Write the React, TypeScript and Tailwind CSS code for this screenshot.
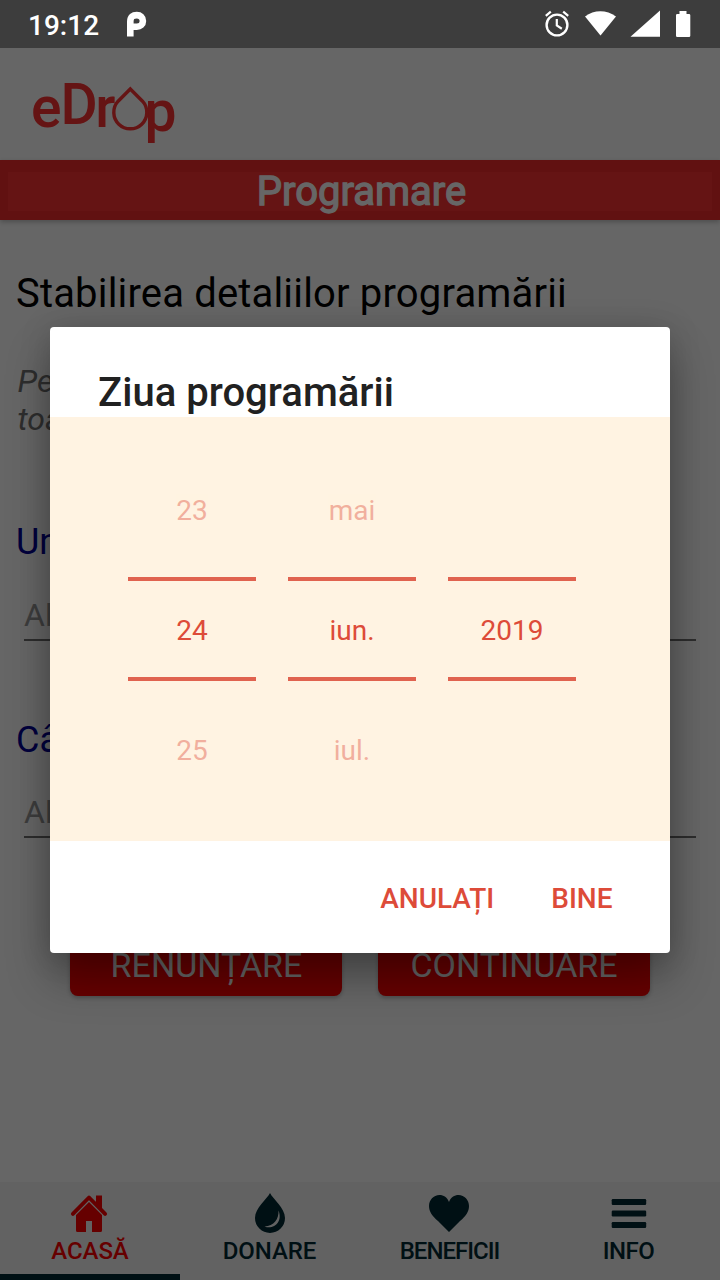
import React from "react";

function StatusBar() {
  return (
    <header className="relative z-20 flex h-12 shrink-0 items-center justify-between bg-[#3d3d3d] text-white">
      <div className="flex items-center">
        <span className="ml-[28px] mt-[3px] text-[28px] font-medium leading-none">19:12</span>
        <svg className="ml-[27px]" width="22" height="26" viewBox="0 0 22 26">
          <path
            fill="none"
            stroke="currentColor"
            strokeWidth="6.6"
            d="M4.3 25.5V10.5C4.3 5.5 7 4.1 10.8 4.1C14.3 4.1 16.9 6.3 16.9 9.9C16.9 13.5 14.3 15.7 10.8 15.7H4.3"
          />
        </svg>
      </div>
      <svg className="mr-[28px]" width="150" height="32" viewBox="542 8 150 32" fill="currentColor">
        <circle cx="557" cy="25" r="10.4" fill="none" stroke="currentColor" strokeWidth="2.4" />
        <path d="M556.8 19v6.5l5 3.2M545.8 15.9l5-4.2M568.2 15.9l-5-4.2" fill="none" stroke="currentColor" strokeWidth="2.2" />
        <path d="M585 16.6C589.5 13 595 11.3 600.3 11.3S611.5 13 616 16.6L600.5 35.5Z" />
        <path d="M630.5 36.7H660V10.5Z" />
        <path d="M679.5 11h7v3h2.5a1.3 1.3 0 0 1 1.3 1.3v20.4a1.3 1.3 0 0 1-1.3 1.3h-11.7a1.3 1.3 0 0 1-1.3-1.3v-20.4a1.3 1.3 0 0 1 1.3-1.3h2.2Z" />
      </svg>
    </header>
  );
}

function Logo() {
  return (
    <svg className="ml-7 block" width="156" height="112" viewBox="28 48 156 112" fill="#fc3232">
      <g fontFamily="Roboto, sans-serif" fontSize="57" fontWeight="500">
        <text x="31" y="127">e</text>
        <text x="60.5" y="123.7">D</text>
        <text x="95.3" y="127">r</text>
        <text x="144.5" y="131">p</text>
      </g>
      <path
        d="M130.3 89L142.5 101.2A16.5 16.5 0 1 1 118.1 101.2Z"
        fill="none"
        stroke="#fc3232"
        strokeWidth="3.4"
      />
    </svg>
  );
}

function Field({ label, inputClass }: { label: string; inputClass: string }) {
  return (
    <div className="h-[198px] px-4">
      <div className="text-[36px] leading-[42px] text-[#000099]">{label}</div>
      <div className={inputClass}>Al</div>
    </div>
  );
}

function Tab({
  label,
  labelClass,
  active,
  children,
}: {
  label: string;
  labelClass: string;
  active?: boolean;
  children: React.ReactNode;
}) {
  return (
    <div className={active ? "flex w-[180px] flex-col items-center text-[#ff0000]" : "flex w-[180px] flex-col items-center text-[#002833]"}>
      <div className="mt-[10px] h-[44px]">{children}</div>
      <span className={labelClass}>{label}</span>
      {active && <div className="mt-auto h-[6px] w-full bg-[#002833]" />}
    </div>
  );
}

function Wheel({ items }: { items: string[] }) {
  return (
    <div className="flex w-32 flex-col text-center text-[28px] leading-[40px] text-[#dd4b39]">
      <div className="flex h-[160px] items-center justify-center pt-[28px]">
        <span className="opacity-40">{items[0]}</span>
      </div>
      <div className="flex h-[104px] items-center justify-center border-y-4 border-[#e0624f] pt-[4px]">{items[1]}</div>
      <div className="flex h-[160px] items-center justify-center pb-[20px]">
        <span className="opacity-40">{items[2]}</span>
      </div>
    </div>
  );
}

function DateDialog() {
  return (
    <div className="absolute inset-0 z-10 flex items-center justify-center bg-black/60">
      <div className="flex h-[626px] w-[620px] flex-col overflow-hidden rounded-[4px] bg-white shadow-[0_26px_44px_0_rgba(0,0,0,0.3),0_2px_32px_0_rgba(0,0,0,0.16)]">
        <h2 className="h-[90px] pl-12 pt-[42px] text-[40px] font-medium leading-[47px] tracking-[0.03px] text-[#212121]">Ziua programării</h2>
        <div className="flex h-[424px] gap-8 bg-[#fff3e2] pl-[78px]">
          <Wheel items={["23", "24", "25"]} />
          <Wheel items={["mai", "iun.", "iul."]} />
          <Wheel items={["", "2019", ""]} />
        </div>
        <div className="flex h-[112px] items-center justify-end gap-[57px] pr-[57.5px] pt-[3px] text-[28px] font-medium text-[#dd4b39]">
          <button>ANULAȚI</button>
          <button>BINE</button>
        </div>
      </div>
    </div>
  );
}

export default function App() {
  return (
    <div className="relative flex h-[1280px] w-[720px] flex-col overflow-hidden bg-white font-['Roboto',sans-serif]">
      <StatusBar />
      <Logo />
      <div className="flex h-[60px] shrink-0 items-center justify-center border-x-8 border-b-[9px] border-t-[12px] border-[#f22b2b] bg-[#fc3232] shadow-[0_2px_5px_rgba(0,0,0,0.25)]">
        <h1 className="ml-[3px] text-[40px] font-normal leading-none text-white [-webkit-text-stroke:1.3px_#fff]">
          Programare
        </h1>
      </div>
      <main className="flex flex-1 flex-col">
        <h2 className="mt-[50px] pl-4 text-[40px] leading-[47px] tracking-[0.17px] text-black">Stabilirea detaliilor programării</h2>
        <p className="mt-[45px] whitespace-pre pl-[17.5px] text-[32px] italic leading-[38px] text-[#737373]">{"Pe\ntoa"}</p>
        <div className="mt-[83px]">
          <Field
            label="Un"
            inputClass="mx-2 mt-[26px] h-[52px] border-b-2 border-[#727272] text-[32px] leading-[52px] text-[#999999]"
          />
          <Field
            label="Câ"
            inputClass="mx-2 mt-[25px] h-[52px] border-b-2 border-[#727272] text-[32px] leading-[52px] text-[#999999]"
          />
        </div>
        <div className="flex gap-9 pl-[70px] text-[34px] text-white">
          <button className="h-[79px] w-[272px] rounded-lg bg-[#ff0000] pl-px pt-[18px] shadow-[0_2px_4px_rgba(0,0,0,0.25)]">RENUNȚARE</button>
          <button className="h-[79px] w-[272px] rounded-lg bg-[#ff0000] pt-[18px] shadow-[0_2px_4px_rgba(0,0,0,0.25)]">CONTINUARE</button>
        </div>
      </main>
      <nav className="flex h-[98px] shrink-0 bg-[#f6f6f6]">
        <Tab label="ACASĂ" labelClass="text-[24px] font-medium leading-[30px] tracking-[-0.1px]" active>
          <svg width="40" height="42" viewBox="70 1192 40 42" fill="currentColor">
            <path d="M89 1202L102 1215V1230.5Q102 1232 100.5 1232H92V1221H86V1232H77.5Q76 1232 76 1230.5V1215Z" />
            <path d="M72.9 1213.9L89 1197.5L105.1 1213.9" fill="none" stroke="currentColor" strokeWidth="3.9" strokeLinecap="round" strokeLinejoin="round" />
            <path d="M96 1204V1195.5H102V1210Z" />
          </svg>
        </Tab>
        <Tab label="DONARE" labelClass="pr-px text-[24px] font-medium leading-[30px] tracking-[-0.1px]">
          <svg width="40" height="42" viewBox="250 1192 40 42" fill="currentColor">
            <path
              fillRule="evenodd"
              d="M270 1193C273 1199 285 1208 285 1218A15 15 0 0 1 255 1218C255 1208 267 1199 270 1193ZM278.5 1210.5C279 1219 274 1226 264.5 1226.5C274 1230 283 1222 278.5 1210.5Z"
            />
          </svg>
        </Tab>
        <Tab label="BENEFICII" labelClass="pr-px text-[24px] font-medium leading-[30px] tracking-[-1px]">
          <svg width="42" height="42" viewBox="429 1192 42 42" fill="currentColor">
            <path d="M449 1232L438 1221C432 1216 429 1211.5 429 1206C429 1200 433.5 1195 439.5 1195C443.5 1195 447.5 1197.5 449 1202C450.5 1197.5 454.5 1195 458.5 1195C464.5 1195 469 1200 469 1206C469 1211.5 466 1216 460 1221Z" />
          </svg>
        </Tab>
        <Tab label="INFO" labelClass="pr-[3px] text-[24px] font-medium leading-[30px] tracking-[-0.5px]">
          <svg width="42" height="42" viewBox="609 1192 42 42" fill="currentColor">
            <rect x="611.7" y="1199" width="34.5" height="6" rx="1.2" />
            <rect x="611.7" y="1210.5" width="34.5" height="6" rx="1.2" />
            <rect x="611.7" y="1222" width="34.5" height="6" rx="1.2" />
          </svg>
        </Tab>
      </nav>
      <DateDialog />
    </div>
  );
}
